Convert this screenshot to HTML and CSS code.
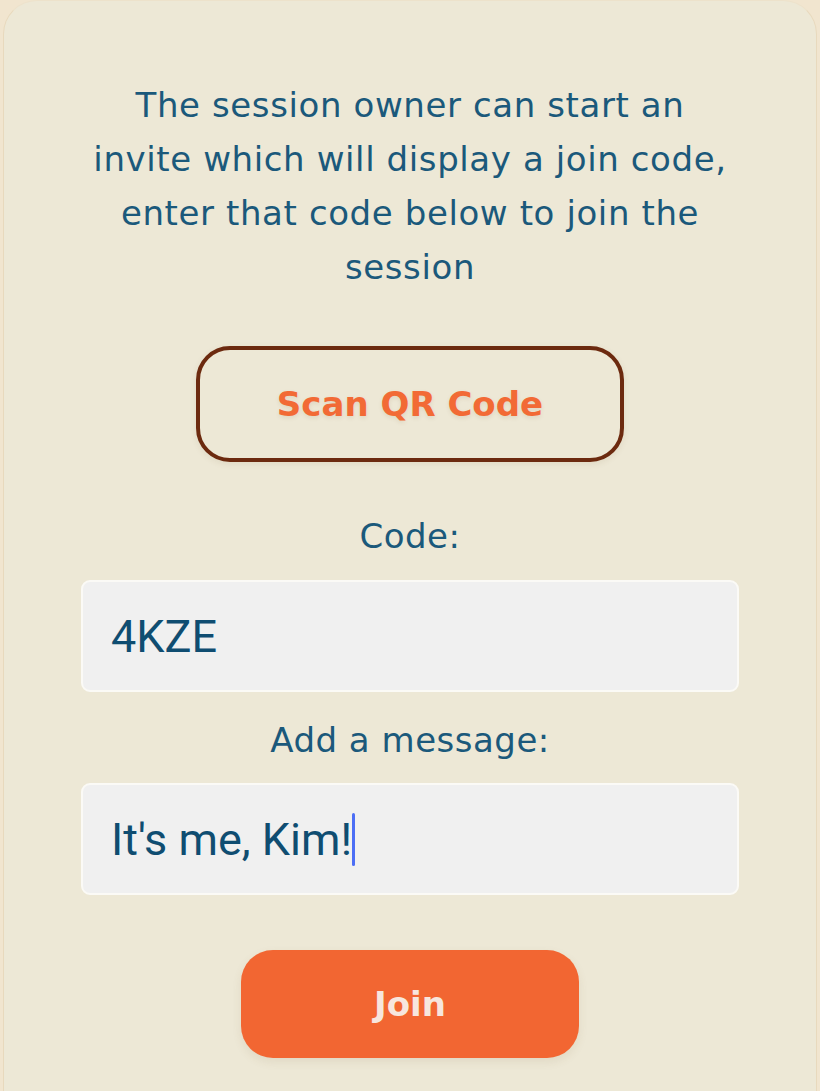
FILE: index.html
```html
<!DOCTYPE html>
<html lang="en">
<head>
<meta charset="utf-8">
<title>Join session</title>
<link rel="stylesheet" href="styles.css">
</head>
<body>
<main class="card">
  <p class="intro">The session owner can start an invite which will display a join code, enter that code below to join the session</p>
  <button class="scan-btn" type="button">Scan QR Code</button>
  <label class="field-label label-code">Code:</label>
  <div class="field" role="textbox">4KZE</div>
  <label class="field-label label-msg">Add a message:</label>
  <div class="field field-msg" role="textbox">It's me, Kim!<span class="caret"></span></div>
  <button class="join-btn" type="button">Join</button>
</main>
</body>
</html>
```
FILE: styles.css
```css
html, body {
  margin: 0;
  padding: 0;
}
body {
  background: #f1e5cf;
  font-family: "DejaVu Sans", "Liberation Sans", sans-serif;
  color: #1b597b;
  overflow: hidden;
}
.card {
  margin: 0 3px;
  min-height: 100vh;
  background: #ede8d6;
  border-left: 1px solid #e8d9bd;
  border-right: 1px solid #e8d9bd;
  border-top: 1px solid #ede2cb;
  border-radius: 34px 34px 0 0;
  padding-top: 77px;
  display: flex;
  flex-direction: column;
  align-items: center;
  box-sizing: border-box;
}
.intro {
  width: 658px;
  margin: 0;
  text-align: center;
  font-size: 34px;
  letter-spacing: 0.6px;
  line-height: 54px;
}
.scan-btn {
  margin-top: 52px;
  width: 428px;
  height: 116px;
  box-sizing: border-box;
  border: 4px solid #6c2a0f;
  border-radius: 34px;
  background: transparent;
  color: #f26a35;
  font-family: "DejaVu Sans", "Liberation Sans", sans-serif;
  font-weight: bold;
  font-size: 34px;
  text-shadow: 0 2px 4px rgba(120, 80, 40, 0.12);
  box-shadow: 0 2px 6px rgba(120, 90, 50, 0.10);
  padding: 0;
}
.field-label {
  display: block;
  font-size: 34px;
  line-height: 40px;
  letter-spacing: 0.5px;
  text-align: center;
}
.label-code { margin-top: 54px; }
.label-msg { margin-top: 28px; }
.field {
  margin-top: 24px;
  width: 658px;
  height: 112px;
  box-sizing: border-box;
  background: #f0f0f0;
  border: 2px solid #fbfaf6;
  border-radius: 9px;
  padding-left: 28px;
  display: flex;
  align-items: center;
  font-family: Roboto, "Liberation Sans", sans-serif;
  font-size: 45px;
  color: #0f4d71;
}
.field-msg { margin-top: 23px; }
.caret {
  display: inline-block;
  width: 3px;
  height: 53px;
  border-radius: 2px;
  background: #4c6ef5;
}
.join-btn {
  margin-top: 55px;
  width: 338px;
  height: 108px;
  border: none;
  border-radius: 32px;
  background: #f26632;
  color: #f7e6de;
  font-family: "DejaVu Sans", "Liberation Sans", sans-serif;
  font-weight: bold;
  font-size: 34px;
  padding: 0;
  box-shadow: 0 4px 10px rgba(120, 90, 50, 0.10);
}
```
